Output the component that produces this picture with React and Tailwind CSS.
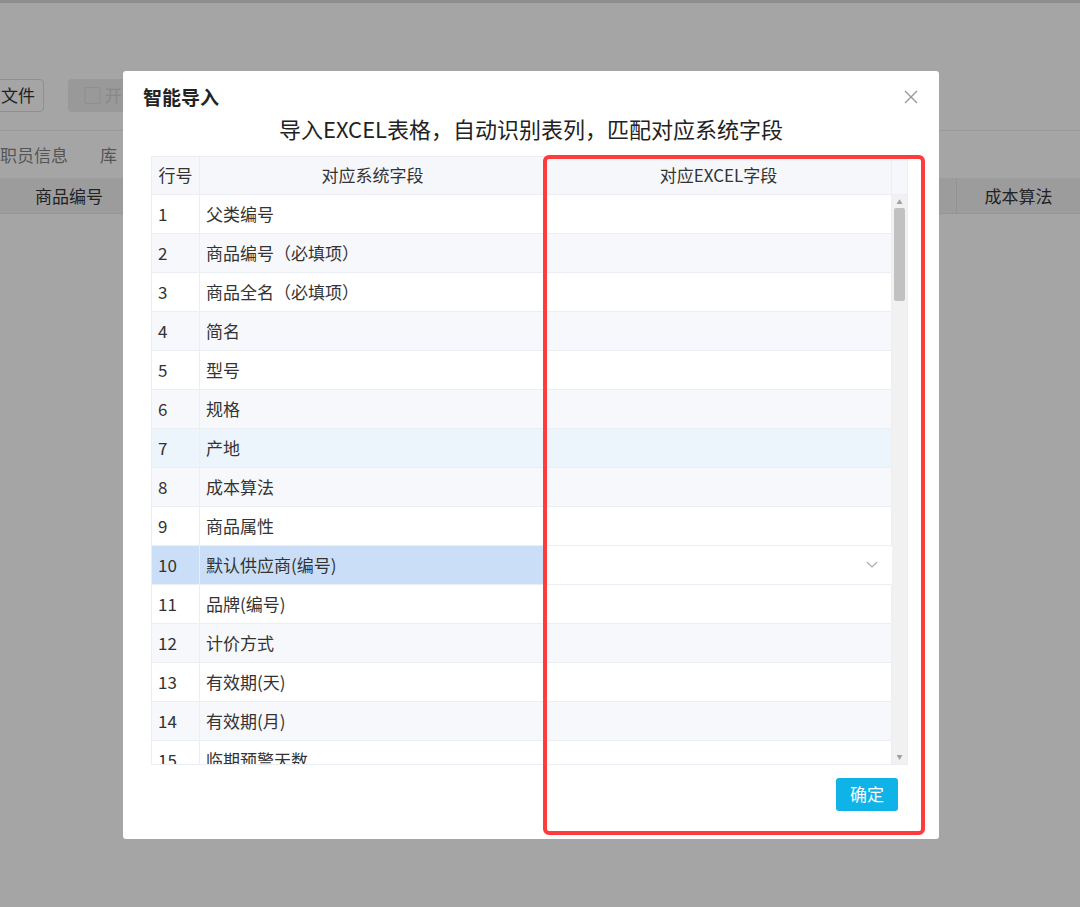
import React from "react";

const rows = ["父类编号","商品编号（必填项）","商品全名（必填项）","简名","型号","规格","产地","成本算法","商品属性","默认供应商(编号)","品牌(编号)","计价方式","有效期(天)","有效期(月)","临期预警天数"];

export default function App() {
  return (
    <div className="relative w-[1080px] h-[907px] overflow-hidden bg-[#a5a5a5] text-[#333]" style={{fontFamily:'"Noto Sans CJK SC","Noto Sans",sans-serif'}}>
      <div className="h-[3px] bg-[#8e8e8e]" />
      <div className="flex items-center gap-6 pt-[74px] h-[110px]">
        <div className="h-[33px] px-2 -ml-2 border border-[#8f8f8f] rounded flex items-center text-[17px] text-[#222]">文件</div>
        <div className="h-[33px] w-[80px] rounded bg-[#999] flex items-center px-4 text-[17px] text-[#888]">▢ 开</div>
      </div>
      <div className="mt-[17px] border-t border-[#999] h-[48px] flex items-center gap-8 text-[17px] text-[#555]">
        <span>职员信息</span><span>库</span>
      </div>
      <div className="h-[36px] bg-[#9c9c9c] border-b border-[#959595] flex items-center text-[17px] text-[#222]">
        <span className="ml-[35px]">商品编号</span>
        <div className="ml-auto w-[124px] h-full border-l border-[#929292] flex items-center justify-center">成本算法</div>
      </div>

      <div className="absolute left-[123px] top-[71px] w-[816px] h-[768px] bg-white rounded-[3px] flex flex-col">
        <div className="flex items-center justify-between pl-[20px] pr-[20px] pt-[12px]">
          <span className="text-[19px] font-bold text-[#222]">智能导入</span>
          <svg width="16" height="16" viewBox="0 0 16 16" stroke="#999" strokeWidth="1.4"><path d="M2 2L14 14M14 2L2 14"/></svg>
        </div>
        <div className="text-center text-[22px] text-[#222] mt-[1px] leading-[30px]">导入EXCEL表格，自动识别表列，匹配对应系统字段</div>
        <div className="ml-[28px] mt-[13px] w-[757px] h-[609px] border border-[#ebeef5] flex flex-col overflow-hidden text-[17px]">
          <div className="flex h-[38px] bg-[#f6f7fb] border-b border-[#ebeef5] shrink-0">
            <div className="w-[48px] border-r border-[#ebeef5] flex items-center justify-center">行号</div>
            <div className="w-[346px] border-r border-[#ebeef5] flex items-center justify-center">对应系统字段</div>
            <div className="w-[346px] border-r border-[#ebeef5] flex items-center justify-center">对应EXCEL字段</div>
            <div className="flex-1" />
          </div>
          <div className="flex flex-1 overflow-hidden">
            <div className="w-[740px]">
              {rows.map((r, i) => {
                const sel = i === 9, hov = i === 6;
                const bg = sel ? "bg-white" : hov ? "bg-[#ecf4fc]" : i % 2 ? "bg-[#f7f8fb]" : "bg-white";
                const lb = sel ? "bg-[#cadff7]" : "";
                return (
                  <div key={i} className={`flex h-[39px] shrink-0 ${bg} border-b border-[#ebeef5]`}>
                    <div className={`w-[48px] border-r border-[#ebeef5] flex items-center pl-[6px] ${lb}`}>{i + 1}</div>
                    <div className={`w-[346px] border-r border-[#ebeef5] flex items-center pl-[6px] ${lb}`}>{r}</div>
                    <div className={`w-[346px] flex items-center justify-end pr-[14px] ${sel ? "" : "border-r border-[#ebeef5]"}`}>
                      {sel && <svg width="12" height="8" viewBox="0 0 12 8" fill="none" stroke="#aaa" strokeWidth="1.2"><path d="M1 1l5 5 5-5"/></svg>}
                    </div>
                  </div>
                );
              })}
            </div>
            <div className="w-[17px] bg-[#f1f1f1] flex flex-col items-center py-[3px]">
              <span className="text-[6px] leading-[8px] text-[#a0a0a0]">▲</span>
              <div className="w-[11px] h-[93px] bg-[#c1c1c1] rounded-[2px] mt-[2px]" />
              <div className="flex-1" />
              <span className="text-[6px] leading-[8px] text-[#a0a0a0]">▼</span>
            </div>
          </div>
        </div>
        <div className="flex justify-end pr-[41px] mt-[13px]">
          <div className="w-[62px] h-[33px] rounded-[3px] bg-[#10b3e8] text-white text-[17px] flex items-center justify-center">确定</div>
        </div>
      </div>

      <div className="absolute left-[543px] top-[155px] w-[382px] h-[680px] border-[4px] border-[#ff3b3b] rounded-[6px]" />
    </div>
  );
}
